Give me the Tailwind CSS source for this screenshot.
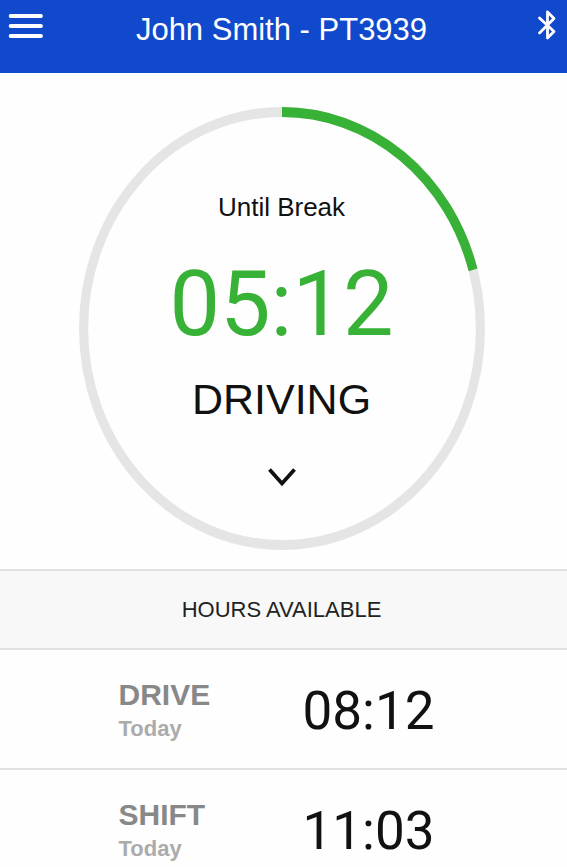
<!DOCTYPE html>
<html lang="en">
<head>
<meta charset="utf-8">
<meta name="viewport" content="width=device-width, initial-scale=1">
<title>John Smith - PT3939</title>
<script src="https://cdn.jsdelivr.net/npm/@tailwindcss/browser@4"></script>
</head>
<body class="min-h-screen overflow-x-hidden bg-[#fefefe] font-['Liberation_Sans',Arial,sans-serif] text-[#111111]">
  <header class="flex h-[73px] items-start justify-between bg-[#1049cc] px-2 text-white">
    <button type="button" aria-label="Open menu" class="flex h-[52px] w-9 items-center">
      <svg class="h-7 w-9" viewBox="0 0 36 28" fill="none" stroke="currentColor" stroke-width="3.8" stroke-linecap="round" aria-hidden="true">
        <path d="M2.6 4H33M2.6 14H33M2.6 24H33"/>
      </svg>
    </button>
    <h1 class="pt-3 pr-1 text-[31px] leading-9">John Smith - PT3939</h1>
    <button type="button" aria-label="Bluetooth" class="flex h-[50px] w-9 items-center justify-end">
      <svg class="h-8 w-6" viewBox="0 0 24 32" fill="none" stroke="currentColor" stroke-width="2.8" stroke-linejoin="round" stroke-linecap="round" aria-hidden="true">
        <path d="M4.5 9L19 22.5L12.500 29V3L19 9.5L4.5 24"/>
      </svg>
    </button>
  </header>

  <main>
    <section class="flex justify-center pt-[34px] pr-1 pb-[19px]" aria-label="Current status">
      <div class="grid h-[443px] w-[406px]">
        <svg class="col-start-1 row-start-1 h-full w-full" viewBox="0 0 400 400" preserveAspectRatio="none" fill="none" stroke-width="9" aria-hidden="true">
          <circle cx="200" cy="200" r="195.5" stroke="#e5e5e5"/>
          <circle cx="200" cy="200" r="195.5" stroke="#38b137" pathLength="360" stroke-dasharray="74.3 285.7" transform="rotate(-90 200 200)"/>
        </svg>
        <div class="col-start-1 row-start-1 flex flex-col items-center pt-[84px]">
          <p class="text-[26px] leading-8">Until Break</p>
          <p class="mt-8 font-[Roboto,sans-serif] text-[90px] leading-[100px] text-[#38b137]">05:12</p>
          <p class="mt-5 text-[43px] leading-12">DRIVING</p>
          <button type="button" aria-label="Change status" class="mt-9 p-2">
            <svg class="h-5 w-7" viewBox="0 0 28 20" fill="none" stroke="currentColor" stroke-width="3.8" aria-hidden="true">
              <path d="M1.5 2.5L14 16.500L26.5 2.5"/>
            </svg>
          </button>
        </div>
      </div>
    </section>

    <section>
      <h2 class="flex h-[81px] items-center justify-center border-y-2 border-[#e2e2e2] bg-[#f8f8f8] pr-1 text-[22px] text-[#222222]">HOURS AVAILABLE</h2>
      <dl>
        <div class="flex h-[120px] justify-center border-b-2 border-[#e2e2e2] pt-1 pr-3">
          <div class="flex w-[318px] items-center justify-between">
            <dt class="flex flex-col font-bold text-[#888888]"><span class="text-[30px] leading-9">DRIVE</span><span class="text-[22px] leading-8 text-[#ababab]">Today</span></dt>
            <dd class="pr-[2px] font-[Roboto,sans-serif] text-[53px] leading-16">08:12</dd>
          </div>
        </div>
        <div class="flex h-[120px] justify-center border-b-2 border-[#e2e2e2] pt-1 pr-3">
          <div class="flex w-[318px] items-center justify-between">
            <dt class="flex flex-col font-bold text-[#888888]"><span class="text-[30px] leading-9">SHIFT</span><span class="text-[22px] leading-8 text-[#ababab]">Today</span></dt>
            <dd class="pr-[2px] font-[Roboto,sans-serif] text-[53px] leading-16">11:03</dd>
          </div>
        </div>
      </dl>
    </section>
  </main>
</body>
</html>
